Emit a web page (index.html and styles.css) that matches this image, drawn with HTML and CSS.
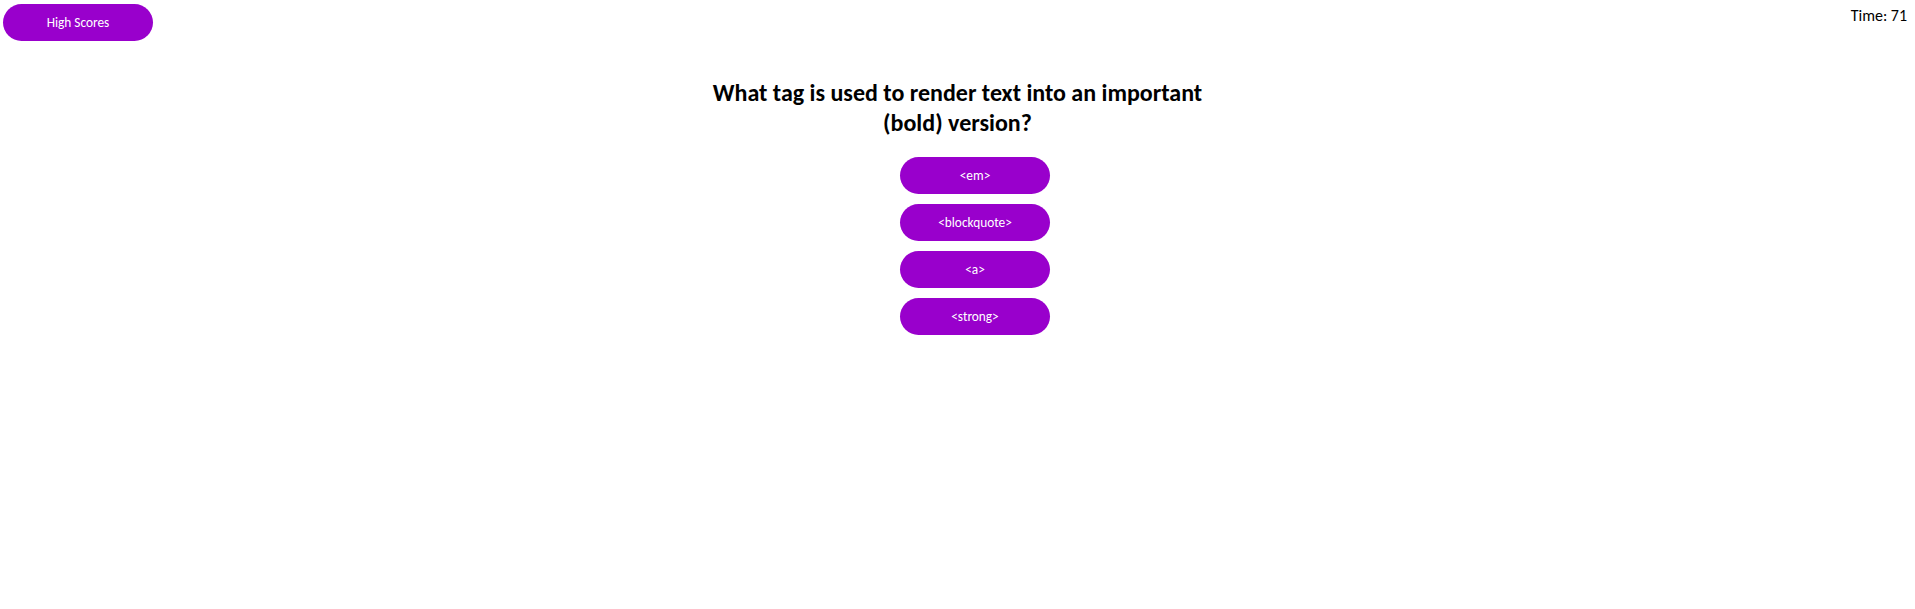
FILE: index.html
```html
<!DOCTYPE html>
<html>
<head>
<meta charset="utf-8">
<link rel="stylesheet" href="styles.css">
</head>
<body>
<header class="top">
  <button class="btn btn-scores">High Scores</button>
  <div class="timer">Time: 71</div>
</header>
<main class="quiz">
  <h2 class="question">What tag is used to render text into an important (bold) version?</h2>
  <ul class="answers">
    <li><button class="btn">&lt;em&gt;</button></li>
    <li><button class="btn">&lt;blockquote&gt;</button></li>
    <li><button class="btn">&lt;a&gt;</button></li>
    <li><button class="btn">&lt;strong&gt;</button></li>
  </ul>
</main>
</body>
</html>
```

FILE: styles.css
```css
html, body {
  margin: 0;
  padding: 0;
  background: #ffffff;
}
body {
  font-family: Carlito, Calibri, Lato, "Liberation Sans", sans-serif;
  color: #000;
}
.top {
  display: flex;
  justify-content: space-between;
  align-items: flex-start;
  padding: 4px 8px 0 3px;
}
.btn {
  width: 150px;
  height: 37px;
  border: none;
  border-radius: 19px;
  background: #9900cc;
  color: #ffffff;
  font-family: inherit;
  font-size: 13.333px;
  padding: 0;
  cursor: pointer;
}
.timer {
  font-size: 16px;
  line-height: 20px;
  margin-top: 2px;
}
.quiz {
  display: flex;
  flex-direction: column;
  align-items: center;
}
.question {
  width: 510px;
  margin: 37px 0 19px 0;
  text-align: center;
  font-size: 24px;
  line-height: 30px;
  font-weight: bold;
}
.answers {
  list-style: none;
  margin: 0;
  padding: 0 0 0 35px;
  display: flex;
  flex-direction: column;
  gap: 10px;
}
.answers li {
  display: flex;
}
```
